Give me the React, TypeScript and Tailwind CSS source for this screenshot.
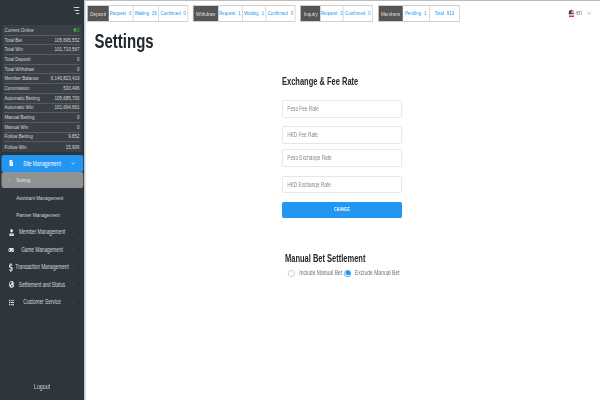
import React from 'react';
import { ChevronDown, ChevronLeft, ChevronRight } from 'lucide-react';
import { FaDollarSign, FaFileAlt, FaGamepad, FaGlobeAmericas, FaList, FaUserTie } from 'react-icons/fa';

const stats = [
  ['Current Online', ''],
  ['Total Bet', '105,695,552'],
  ['Total Win', '101,710,567'],
  ['Total Deposit', '0'],
  ['Total Withdraw', '0'],
  ['Member Balance', '6,140,823,419'],
  ['Commission', '530,496'],
  ['Automatic Betting', '105,685,700'],
  ['Automatic Win', '101,694,661'],
  ['Manual Betting', '0'],
  ['Manual Win', '0'],
  ['Follow Betting', '9,852'],
  ['Follow Win', '15,906'],
];

const groups = [
  { label: 'Deposit', w: 27.6, cells: [['Request', '0', 33.4], ['Waiting', '26', 34], ['Confirmed', '0', 38]] },
  { label: 'Withdraw', w: 32.4, cells: [['Request', '1', 33.3], ['Waiting', '1', 31.3], ['Confirmed', '0', 38]] },
  { label: 'Inquiry', w: 26, cells: [['Request', '3', 31], ['Confirmed', '0', 38]] },
  { label: 'Members', w: 32.5, cells: [['Pending', '1', 36], ['Total', '913', 39]] },
];

const menu = [
  { label: 'Member Management', icon: <FaUserTie size={7} /> },
  { label: 'Game Management', icon: <FaGamepad size={8} /> },
  { label: 'Transaction Management', icon: <FaDollarSign size={9} /> },
  { label: 'Settlement and Status', icon: <FaGlobeAmericas size={7} /> },
  { label: 'Customer Service', icon: <FaList size={7} /> },
];

const fields = [
  { name: 'Peso Fee Rate', mt: 'mt-0' },
  { name: 'HKD Fee Rate', mt: 'mt-[8.5px]' },
  { name: 'Peso Exchange Rate', mt: 'mt-[5.5px]' },
  { name: 'HKD Exchange Rate', mt: 'mt-[9px]' },
];

const App: React.FC = () => {
  return (
    <div className="w-[600px] h-[400px] overflow-hidden bg-white">
      {/* the capture is squeezed sideways, so the page is laid out at 800 wide */}
      <div className="flex w-[800px] h-[400px] origin-top-left scale-x-75 font-['Liberation_Sans',sans-serif]">
        <aside className="flex flex-col w-[112px] h-full shrink-0 bg-[#2f353d] text-[#d5d8da]">
          <div className="flex justify-end h-[25px] pt-[7px] pr-[6px]">
            <svg width="8" height="7" viewBox="0 0 8 7" fill="#d5d8da">
              <rect x="0" y="0" width="8" height="1" />
              <rect x="1.5" y="3" width="6.5" height="1" />
              <rect x="3.5" y="6" width="4.5" height="1" />
            </svg>
          </div>
          <div className="mx-[3px] bg-[#3b4046] px-[3px] pt-[1px] text-[6px]">
            {stats.map(([name, value], i) => (
              <div key={name} className="flex items-center justify-between h-[9.7px] border-b border-[#555b61] last:border-b-0">
                <span>{name}</span>
                {i === 0 ? (
                  <span className="flex items-center gap-[1px] text-[#3fae49]">
                    <span className="w-[4px] h-[4px] rounded-full bg-[#3fae49]" />0
                  </span>
                ) : (
                  <span>{value}</span>
                )}
              </div>
            ))}
          </div>
          <div className="flex items-center h-[17px] mt-[3px] mx-[1.5px] rounded-[3px] bg-[#2196f3] text-white text-[6.4px]">
            <span className="flex justify-center w-[20px] pl-[7px]"><FaFileAlt size={6} /></span>
            <span className="flex-1 text-center">Site Management</span>
            <span className="flex justify-center w-[20px] pr-[6px]"><ChevronDown size={7} /></span>
          </div>
          <div className="flex items-center h-[16px] mt-[0.5px] mx-[1.5px] rounded-[3px] bg-[#8f9192] text-[#e8e8e8] text-[6px]">
            <span className="flex justify-center w-[20px]"><ChevronRight size={6} className="text-[#b9bbbc]" /></span>
            Setting
          </div>
          {['Assistant Management', 'Partner Management'].map((name) => (
            <div key={name} className="flex items-center h-[17.5px] mx-[1.5px] text-[6.2px]">
              <span className="flex justify-center w-[20px]"><ChevronRight size={6} className="text-[#454b52]" /></span>
              {name}
            </div>
          ))}
          {menu.map((item) => (
            <div key={item.label} className="flex items-center h-[17.5px] mx-[1.5px] text-[6.3px]">
              <span className="flex justify-center w-[20px] pl-[7px] text-[#e8e9ea]">{item.icon}</span>
              <span className="flex-1 text-center whitespace-nowrap">{item.label}</span>
              <span className="flex justify-center w-[20px] pr-[6px]"><ChevronLeft size={7} className="text-[#4d535a]" /></span>
            </div>
          ))}
          <div className="mt-auto pb-[8px] text-center text-[7px]">Logout</div>
        </aside>
        <div className="w-[2px] h-full shrink-0 bg-[#c3c7ca]" />
        <main className="flex-1 min-w-0 border-t border-[#bdbdbd]">
          <div className="flex items-center h-[24px] pl-[2px] pt-[1px]">
            <div className="flex gap-[6.2px]">
              {groups.map((g) => (
                <div key={g.label} className="flex h-[17.5px] border border-[#cfcfcf] text-[5.8px]">
                  <span className="flex items-center justify-center bg-[#555] text-[#e0e0e0] text-[6.2px]" style={{ width: g.w }}>
                    {g.label}
                  </span>
                  {g.cells.map(([name, count, w]) => (
                    <span
                      key={name as string}
                      className="flex items-center justify-center gap-[4px] border-r border-[#cfcfcf] last:border-r-0 text-[#2196f3]"
                      style={{ width: w as number }}
                    >
                      <span>{name}</span>
                      <span>{count}</span>
                    </span>
                  ))}
                </div>
              ))}
            </div>
            <div className="flex items-center ml-auto mr-[11px] text-[7px] text-[#777]">
              <svg width="8" height="8" viewBox="0 0 8 8" className="rounded-full">
                <rect width="8" height="8" fill="#f2f2f2" />
                <rect y="0" width="8" height="1.4" fill="#d8343d" />
                <rect y="2.8" width="8" height="1.4" fill="#d8343d" />
                <rect y="5.6" width="8" height="1.4" fill="#d8343d" />
                <rect width="4" height="4.2" fill="#3c3b8e" />
              </svg>
              <span className="ml-[2px]">en</span>
              <ChevronDown size={7} className="ml-[6px]" />
            </div>
          </div>
          <h1 className="mt-[4px] ml-[12px] text-[20px] leading-[24px] font-bold text-[#23282c]">Settings</h1>
          <section className="ml-[262px] w-[160px] mt-[23px]">
            <h2 className="text-[10px] leading-[12px] font-bold text-[#23282c]">Exchange &amp; Fee Rate</h2>
            <div className="mt-[12px]">
              {fields.map((f) => (
                <input
                  key={f.name}
                  placeholder={f.name}
                  className={`block w-full h-[17.5px] px-[6px] rounded-[2px] border border-[#dfe3e6] text-[6.3px] outline-none placeholder:text-[#7c8a92] ${f.mt}`}
                />
              ))}
              <button className="block w-full h-[16px] mt-[8.5px] rounded-[2px] bg-[#2196f3] text-white text-[4.8px] font-bold">
                CHANGE
              </button>
            </div>
          </section>
          <section className="ml-[262px] w-[160px] mt-[35px] pl-[4px]">
            <h2 className="text-[10px] leading-[12px] font-bold text-[#23282c]">Manual Bet Settlement</h2>
            <div className="flex items-center mt-[3.5px] pl-[4px] text-[6.7px] text-[#6f7478] whitespace-nowrap">
              <span className="shrink-0 w-[9px] h-[7px] rounded-full border border-[#c4c8cb]" />
              <span className="ml-[6px]">Include Manual Bet</span>
              <span className="shrink-0 flex items-center justify-center w-[9px] h-[7px] ml-[3px] rounded-full border border-[#2196f3]">
                <span className="w-[6px] h-[4.5px] rounded-full bg-[#2196f3]" />
              </span>
              <span className="ml-[5px]">Exclude Manual Bet</span>
            </div>
          </section>
        </main>
      </div>
    </div>
  );
};

export default App;
